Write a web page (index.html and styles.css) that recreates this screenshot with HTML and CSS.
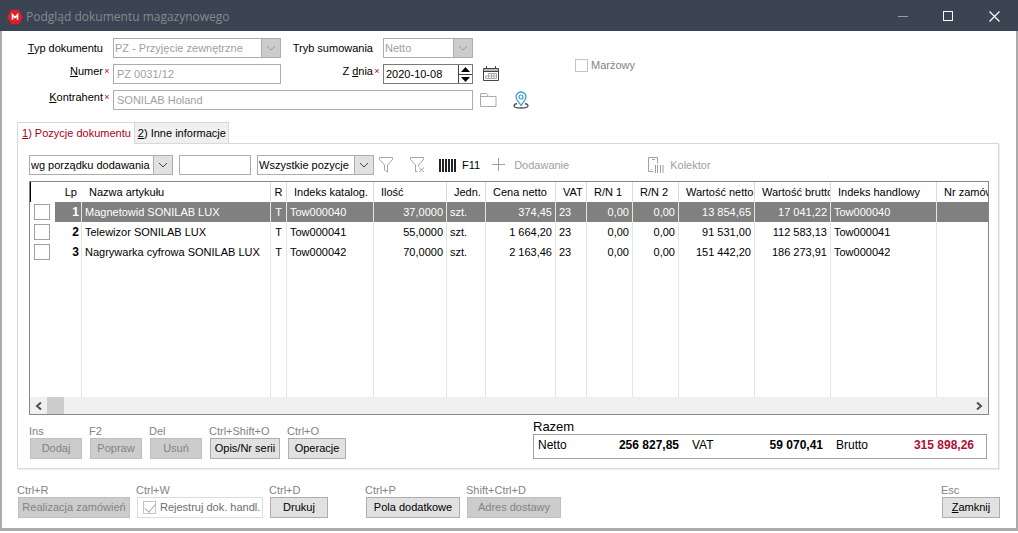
FILE: index.html
```html
<!DOCTYPE html>
<html lang="pl">
<head>
<meta charset="utf-8">
<title>Podgląd dokumentu magazynowego</title>
<link rel="stylesheet" href="styles.css">
</head>
<body>
<div class="window">
  <header class="titlebar">
    <svg class="logo" width="16" height="16" viewBox="0 0 16 16"><path d="M4.500 1.500h7L15 8l-3.500 6.500h-7L1 8z" fill="#e01f26" stroke="#e01f26" stroke-width="1.500" stroke-linejoin="round"/><path d="M5.500 10.800V5.800L8 8.500l2.500-2.700v5" fill="none" stroke="#fff" stroke-width="1.600"/></svg>
    <h1 class="title">Podgląd dokumentu magazynowego</h1>
    <div class="winbtns">
      <button class="winbtn" aria-label="Minimalizuj"><svg width="12" height="12"><path d="M1 5.500h10" stroke="#9a9fa6"/></svg></button>
      <button class="winbtn" aria-label="Maksymalizuj"><svg width="12" height="12"><rect x=".5" y=".5" width="9" height="9" fill="none" stroke="#fff"/></svg></button>
      <button class="winbtn" aria-label="Zamknij okno"><svg width="12" height="12"><path d="M.5.5l10 10M10.500.5l-10 10" stroke="#fff" stroke-width="1.200"/></svg></button>
    </div>
  </header>

  <main class="content">
    <form class="form">
      <label class="lbl wide" for="typ"><span><u>T</u>yp dokumentu</span></label>
      <span class="combo off"><select id="typ" disabled><option>PZ - Przyjęcie zewnętrzne</option></select><svg class="arrow" viewBox="0 0 18 18"><path d="M5 7l4 4 4-4"/></svg></span>
      <label class="lbl wide" for="tryb">Tryb sumowania</label>
      <span class="combo off"><select id="tryb" disabled><option>Netto</option></select><svg class="arrow" viewBox="0 0 18 18"><path d="M5 7l4 4 4-4"/></svg></span>

      <label class="lbl row2" for="numer"><span><u>N</u>umer</span><span class="req">×</span></label>
      <input class="field off row2 col2" id="numer" value="PZ 0031/12" disabled>
      <label class="lbl row2 col3" for="data"><span>Z <u>d</u>nia</span><span class="req">×</span></label>
      <span class="date row2 col4">
        <input id="data" value="2020-10-08">
        <span class="spin">
          <button type="button" aria-label="Następny dzień"><svg width="11" height="8"><path d="M5.500 1l4.500 5H1z"/></svg></button>
          <button type="button" aria-label="Poprzedni dzień"><svg width="11" height="8"><path d="M5.500 7L1 2h9z"/></svg></button>
        </span>
      </span>
      <button type="button" class="icon row2 col5" aria-label="Kalendarz"><svg width="16" height="16"><path d="M1 2h14v3H1z" fill="#bbb"/><path d="M.5 2.500h15v12H.5zM.5 5.500h15" fill="none" stroke="#444"/><path d="M3.500 0v3M12.500 0v3" stroke="#444"/><path d="M5.500 7.500h8v5h-11v-2.500h11M5.500 7.500v5M8.500 7.500v5M11 7.500v5M13.500 7.500v5" fill="none" stroke="#aaa"/></svg></button>

      <label class="lbl row3" for="kontrahent"><span><u>K</u>ontrahent</span><span class="req">×</span></label>
      <input class="field off span3" id="kontrahent" value="SONILAB Holand" disabled>
      <div class="icons">
        <button type="button" class="icon low" aria-label="Folder"><svg width="17" height="15"><path d="M.5 13.500V.5h6l2 3h7.500v10zM.5 3.500h8" fill="none" stroke="#aaa"/></svg></button>
        <button type="button" class="icon" aria-label="Mapa"><svg width="16" height="18"><path d="M4 12.500c-2 .5-3 1.300-3 2.200C1 16 4 17 8 17s7-1 7-2.300c0-.9-1-1.700-3-2.200" fill="none" stroke="#555" stroke-width="1.300"/><path d="M8 14.500C6 11 3 9 3 6a5 5 0 0110 0c0 3-3 5-5 8.500z" fill="#fff" stroke="#3b9bd6" stroke-width="1.300"/><circle cx="8" cy="6" r="2" fill="none" stroke="#3b9bd6" stroke-width="1.200"/></svg></button>
      </div>
      <label class="check marza"><input type="checkbox" disabled>Marżowy</label>
    </form>

    <nav class="tabs">
      <button class="tab active"><u>1</u>) Pozycje dokumentu</button>
      <button class="tab"><u>2</u>) Inne informacje</button>
    </nav>

    <section class="panel">
      <div class="toolbar">
        <span class="combo sort"><select aria-label="Sortowanie"><option>wg porządku dodawania</option></select><svg class="arrow" viewBox="0 0 18 18"><path d="M5 7l4 4 4-4"/></svg></span>
        <input class="field search" aria-label="Szukaj">
        <span class="combo scope"><select aria-label="Zakres"><option>Wszystkie pozycje</option></select><svg class="arrow" viewBox="0 0 18 18"><path d="M5 7l4 4 4-4"/></svg></span>
        <button class="tool" aria-label="Filtr"><svg width="15" height="16"><path d="M.5.5h13v2l-5 5.500v7l-3-2V8l-5-5.500z" fill="none" stroke="#a5a5a5"/></svg></button>
        <button class="tool clear" aria-label="Wyczyść filtr"><svg width="16" height="16"><path d="M7.500 14.500h-2V8l-5-5.500v-2h13v2l-5 5.500v1.500M9 10.500l5 4.500M14 10.500L9 15" fill="none" stroke="#a5a5a5"/></svg></button>
        <button class="tool barcode"><svg width="17" height="13"><path d="M1 0v13M4 0v13M7 0v13M10 0v13M13 0v13M16 0v13" stroke="#222" stroke-width="2"/></svg>F11</button>
        <button class="tool add" disabled><svg width="14" height="14"><path d="M6.500 0v13M0 6.500h13" stroke="#a0a0a0"/></svg>Dodawanie</button>
        <button class="tool collector" disabled><svg width="17" height="16"><path d="M5.500 14.500h-5V.5h9v6" fill="none" stroke="#a0a0a0"/><path d="M4 2.500h3M3 12.500h1M7.500 8v8M9.500 8v8M12.500 8v8M15 8v8" stroke="#a0a0a0"/></svg>Kolektor</button>
      </div>

      <div class="list">
        <div class="scroller">
        <table class="grid">
          <colgroup><col class="w25"><col class="w27"><col class="w189"><col class="w16"><col class="w87"><col class="w73"><col class="w39"><col class="w70"><col class="w31"><col class="w46"><col class="w46"><col class="w76"><col class="w76"><col class="w106"><col></colgroup>
          <thead><tr><th class="first"></th><th class="num plain">Lp</th><th>Nazwa artykułu</th><th class="mid">R</th><th>Indeks katalog.</th><th>Ilość</th><th>Jedn.</th><th>Cena netto</th><th>VAT</th><th>R/N 1</th><th>R/N 2</th><th>Wartość netto</th><th>Wartość brutto</th><th>Indeks handlowy</th><th>Nr zamów</th></tr></thead>
          <tbody>
            <tr class="sel"><td class="tick"><input type="checkbox" aria-label="Pozycja 1"></td><td class="num lp">1</td><td>Magnetowid SONILAB LUX</td><td class="mid">T</td><td>Tow000040</td><td class="num">37,0000</td><td>szt.</td><td class="num">374,45</td><td>23</td><td class="num">0,00</td><td class="num">0,00</td><td class="num">13 854,65</td><td class="num">17 041,22</td><td>Tow000040</td><td></td></tr>
            <tr><td class="tick"><input type="checkbox" aria-label="Pozycja 2"></td><td class="num lp">2</td><td>Telewizor SONILAB LUX</td><td class="mid">T</td><td>Tow000041</td><td class="num">55,0000</td><td>szt.</td><td class="num">1 664,20</td><td>23</td><td class="num">0,00</td><td class="num">0,00</td><td class="num">91 531,00</td><td class="num">112 583,13</td><td>Tow000041</td><td></td></tr>
            <tr><td class="tick"><input type="checkbox" aria-label="Pozycja 3"></td><td class="num lp">3</td><td>Nagrywarka cyfrowa SONILAB LUX</td><td class="mid">T</td><td>Tow000042</td><td class="num">70,0000</td><td>szt.</td><td class="num">2 163,46</td><td>23</td><td class="num">0,00</td><td class="num">0,00</td><td class="num">151 442,20</td><td class="num">186 273,91</td><td>Tow000042</td><td></td></tr>
            <tr class="fill"><td class="tick"></td><td></td><td></td><td></td><td></td><td></td><td></td><td></td><td></td><td></td><td></td><td></td><td></td><td></td><td></td></tr>
          </tbody>
        </table>
        </div>
        <div class="scrollbar">
          <button aria-label="W lewo"><svg width="7" height="8"><path d="M6 .5L2 4l4 3.500" /></svg></button>
          <span class="thumb"></span>
          <button class="right" aria-label="W prawo"><svg width="7" height="8"><path d="M1 .5L5 4 1 7.500"/></svg></button>
        </div>
      </div>

      <div class="below">
        <div class="actions">
          <div class="act w52"><span>Ins</span><button class="btn" disabled>Dodaj</button></div>
          <div class="act w52"><span>F2</span><button class="btn" disabled>Popraw</button></div>
          <div class="act w52"><span>Del</span><button class="btn" disabled>Usuń</button></div>
          <div class="act w70"><span>Ctrl+Shift+O</span><button class="btn">Opis/Nr serii</button></div>
          <div class="act w58"><span>Ctrl+O</span><button class="btn">Operacje</button></div>
        </div>
        <div class="totals">
          <h2>Razem</h2>
          <div class="sums">
            <span>Netto</span><b>256 827,85</b>
            <span>VAT</span><b>59 070,41</b>
            <span>Brutto</span><b class="red">315 898,26</b>
          </div>
        </div>
      </div>
    </section>

    <footer class="footer">
      <div class="act w112"><span>Ctrl+R</span><button class="btn" disabled>Realizacja zamówień</button></div>
      <div class="act w126"><span>Ctrl+W</span><label class="check framed"><input type="checkbox" checked disabled>Rejestruj dok. handl.</label></div>
      <div class="act w58"><span>Ctrl+D</span><button class="btn">Drukuj</button></div>
      <div class="act w94 apart"><span>Ctrl+P</span><button class="btn">Pola dodatkowe</button></div>
      <div class="act w94"><span>Shift+Ctrl+D</span><button class="btn" disabled>Adres dostawy</button></div>
      <div class="act w58 end"><span>Esc</span><button class="btn"><u>Z</u>amknij</button></div>
    </footer>
  </main>
</div>
</body>
</html>
```

FILE: styles.css
```css
* { box-sizing: border-box; }
body { margin: 0; background: #fff; color: #000; font: 11px/13px "Liberation Sans", Arial, sans-serif; }
button, input, select { font: inherit; color: inherit; margin: 0; padding: 0; border: 0; border-radius: 0; background: none; }
svg { display: block; flex: none; }
u { text-underline-offset: 1px; }
h1, h2 { margin: 0; font-weight: normal; }

.window { border: solid #ababab; border-width: 0 2px 3px; }

.titlebar { display: flex; align-items: center; height: 31px; margin: 0 -2px; padding: 2px 0 0 7px; background: #3a4452; }
.title { flex: 1; margin-left: 3px; color: #85898f; font: 12px/16px "Open Sans", "Noto Sans", sans-serif; }
.winbtns { display: flex; }
.winbtn { display: flex; align-items: center; justify-content: center; width: 46px; height: 28px; }

.content { padding: 7px 16px 10px 15px; }

.form { display: grid; grid-template-columns: 96px 168px 102px 90px 102px 1fr; grid-template-rows: repeat(3, 20px); row-gap: 6px; }
.lbl { display: flex; justify-content: flex-end; padding: 1px 2px 0 0; }
.lbl.wide { padding: 4px 10px 0 0; }
.row2 { grid-row: 2; }
.row3 { grid-row: 3; }
.col2 { grid-column: 2; }
.col3 { grid-column: 3; }
.col4 { grid-column: 4; }
.col5 { grid-column: 5; }
.req { width: 8px; color: #c00020; font-size: 9px; text-align: center; }
.field { width: 100%; height: 20px; padding: 0 3px; border: 1px solid #adadad; background: #fff; }
.off { color: #a0a0a0; }
.span3 { grid-column: span 3; }

.combo { position: relative; display: block; height: 20px; border: 1px solid #adadad; background: #fff; }
.combo select { width: 100%; height: 18px; padding: 0 20px 0 1px; appearance: none; opacity: 1; }
.arrow { position: absolute; top: 0; right: 0; width: 19px; height: 18px; border-left: 1px solid #adadad; background: #e1e1e1; fill: none; stroke: #444; }
.off .arrow { background: #ccc; stroke: #999; }

.date { display: flex; height: 20px; border: 1px solid #7a7a7a; background: #fff; }
.date input { flex: 1; min-width: 0; padding-left: 2px; }
.spin { display: grid; grid-template-rows: 1fr 1fr; width: 14px; border-left: 1px solid #3a4452; }
.spin button { display: flex; align-items: center; justify-content: center; }
.spin button + button { border-top: 1px solid #3a4452; }

.icon { display: flex; margin-left: 10px; padding-top: 2px; align-items: flex-start; }
.icons { display: flex; }
.icons .icon { margin-left: 7px; }
.icons .icon + .icon { margin-left: 16px; padding-top: 1px; }
.icon.low { padding-top: 3px; }
.check { display: flex; align-items: center; gap: 3px; color: #838383; }
.check input { appearance: none; width: 13px; height: 13px; border: 1px solid #c4c4c4; background: #fff; }
.marza { grid-row: 1 / 3; grid-column: 6; align-self: end; padding-bottom: 12px; }

.tabs { display: flex; margin-top: 12px; }
.tab { height: 21px; padding: 0 2px 0 3px; border: 1px solid #d9d9d9; border-bottom: 0; background: #f0f0f0; }
.active { position: relative; height: 22px; margin-bottom: -1px; border-right: 0; padding: 0 3px 1px 4px; background: #fff; color: #a80018; }

.panel { margin-right: 1px; padding: 11px 9px 9px 11px; border: 1px solid #d9d9d9; box-shadow: 1px 1px 0 #eee; }
.toolbar { display: flex; align-items: center; height: 20px; }
.sort { width: 144px; }
.search { width: 72px; margin: 0 6px; }
.scope { width: 117px; }
.tool { display: flex; align-items: center; margin-left: 5px; }
.tool:disabled { color: #a0a0a0; }
.clear { margin-left: 16px; }
.barcode { gap: 6px; margin-left: 13px; }
.add { gap: 8px; margin-left: 12px; }
.collector { gap: 5px; margin-left: 79px; }

.list { margin-top: 6px; border: 1px solid #828790; }
.scroller { overflow: hidden; }
.grid { width: 100%; min-width: 958px; table-layout: fixed; border-collapse: separate; border-spacing: 0; }
.w16 { width: 16px; } .w25 { width: 25px; } .w27 { width: 27px; } .w31 { width: 31px; }
.w39 { width: 39px; } .w46 { width: 46px; } .w52 { width: 52px; } .w58 { width: 58px; }
.w70 { width: 70px; } .w73 { width: 73px; } .w76 { width: 76px; } .w87 { width: 87px; }
.w94 { width: 94px; } .w106 { width: 106px; } .w112 { width: 112px; } .w126 { width: 126px; } .w189 { width: 189px; }
.grid th, .grid td { height: 20px; padding: 0 3px; overflow: hidden; white-space: nowrap; text-align: left; font-weight: normal; border-right: 1px solid #e6e6de; }
.grid th { padding: 0 0 0 7px; border-color: #dcdcdc; }
.grid th.first { border-left: 1px solid #000; }
.grid th.first, .grid th.plain, .grid .tick { border-right: 0; }
.grid th.num { padding-right: 5px; }
.grid tr > :last-child { border-right: 0; }
.grid .num { text-align: right; }
.grid .mid { padding: 0; text-align: center; }
.grid .lp { padding-right: 2px; font-weight: bold; font-size: 12px; }
.grid .tick { padding: 0 0 0 4px; }
.tick input { display: block; appearance: none; width: 16px; height: 16px; border: 1px solid #a0a0a0; background: #fff; }
.sel td:not(.tick) { background: #808080; color: #fff; }
.grid .fill td { height: 135px; }

.scrollbar { display: flex; align-items: stretch; height: 17px; background: #f0f0f0; }
.scrollbar button { display: flex; align-items: center; justify-content: center; width: 17px; }
.scrollbar path { fill: none; stroke: #505050; stroke-width: 2; }
.scrollbar .right { margin-left: auto; }
.thumb { width: 17px; background: #cdcdcd; }

.below { display: flex; align-items: flex-end; justify-content: space-between; margin-top: 4px; padding: 0 2px 0 1px; }
.actions { display: flex; gap: 8px; }
.act > span { display: block; margin-left: -1px; color: #838383; white-space: nowrap; }
.btn { display: block; width: 100%; height: 21px; border: 1px solid #adadad; background: #e1e1e1; white-space: nowrap; }
.btn:disabled { border-color: #bfbfbf; background: #ccc; color: #838383; }

.totals { width: 454px; }
.totals h2 { font-size: 13px; line-height: 15px; }
.sums { display: grid; grid-template-columns: 47px 94px 47px 97px 54px 97px; justify-content: start; height: 25px; padding: 3px 4px; border: 1px solid #a0a0a8; font-size: 12px; line-height: 15px; }
.sums b { text-align: right; }
.sums span:not(:first-child) { padding-left: 13px; }
.red { color: #b01030; }

.footer { display: flex; align-items: flex-end; margin-top: 15px; padding-left: 1px; }
.footer .act + .act { margin-left: 7px; }
.footer .apart.act { margin-left: 38px; }
.footer .end.act { margin-left: auto; }
.framed { height: 21px; padding-left: 5px; gap: 4px; border: 1px solid #dcdcdc; color: #6d6d6d; white-space: nowrap; }
.framed input { position: relative; flex: none; }
.framed input::after { content: ""; position: absolute; left: 3px; top: 0; width: 5px; height: 9px; border: solid #aaa; border-width: 0 1px 1px 0; transform: rotate(40deg); }
```
